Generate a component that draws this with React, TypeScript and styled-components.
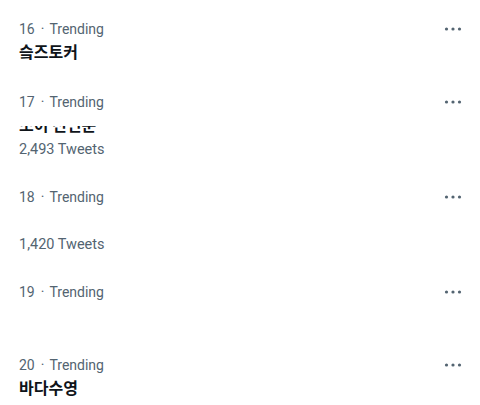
import { createGlobalStyle, styled } from 'styled-components';

type Trend = {
  rank: number;
  title?: string;
  tweets?: string;
  clipped?: boolean;
};

const trends: Trend[] = [
  { rank: 16, title: '슼즈토커' },
  { rank: 17, title: '조이 선언문', tweets: '2,493 Tweets', clipped: true },
  { rank: 18, tweets: '1,420 Tweets' },
  { rank: 19 },
  { rank: 20, title: '바다수영' },
];

const MoreIcon = () => (
  <svg width="20" height="20" viewBox="0 0 20 20" aria-hidden="true">
    <circle cx="3.5" cy="10" r="1.6" fill="currentColor" />
    <circle cx="10" cy="10" r="1.6" fill="currentColor" />
    <circle cx="16.5" cy="10" r="1.6" fill="currentColor" />
  </svg>
);

const App = () => {
  return (
    <>
      <GlobalStyle />
      <List>
        {trends.map((t) => (
          <Item key={t.rank}>
            <Body>
              <Meta>
                {t.rank}
                <Sep>·</Sep>
                Trending
              </Meta>
              <Title $clipped={t.clipped}>{t.title ?? '\u00a0'}</Title>
              {t.tweets && <Count>{t.tweets}</Count>}
            </Body>
            <More>
              <MoreIcon />
            </More>
          </Item>
        ))}
      </List>
    </>
  );
};

export default App;

const GlobalStyle = createGlobalStyle`
  html, body {
    margin: 0;
    padding: 0;
    background: #ffffff;
    overflow: hidden;
  }
  body {
    font-family: Roboto, "Noto Sans CJK KR", sans-serif;
  }
`;

const List = styled.div`
  width: 480px;
  height: 405px;
  padding-top: 5px;
  box-sizing: border-box;
  overflow: hidden;
`;

const Item = styled.div`
  display: flex;
  align-items: flex-start;
  justify-content: space-between;
  padding: 14px 17px 15px 19px;
`;

const Body = styled.div`
  display: flex;
  flex-direction: column;
`;

const Meta = styled.div`
  font-size: 14px;
  line-height: 20px;
  color: #536471;
`;

const Sep = styled.span`
  padding: 0 5px 0 6px;
`;

const Title = styled.div<{ $clipped?: boolean }>`
  font-family: "Noto Sans CJK KR", sans-serif;
  font-size: 16px;
  font-weight: 700;
  line-height: 24px;
  color: #0f1419;
  clip-path: ${(p) => (p.$clipped ? 'inset(14px 0 0 0)' : 'none')};
`;

const Count = styled.div`
  font-size: 14.5px;
  line-height: 22px;
  margin: 3px 0 -3px;
  color: #536471;
`;

const More = styled.div`
  display: flex;
  width: 20px;
  height: 20px;
  color: #536471;
`;
